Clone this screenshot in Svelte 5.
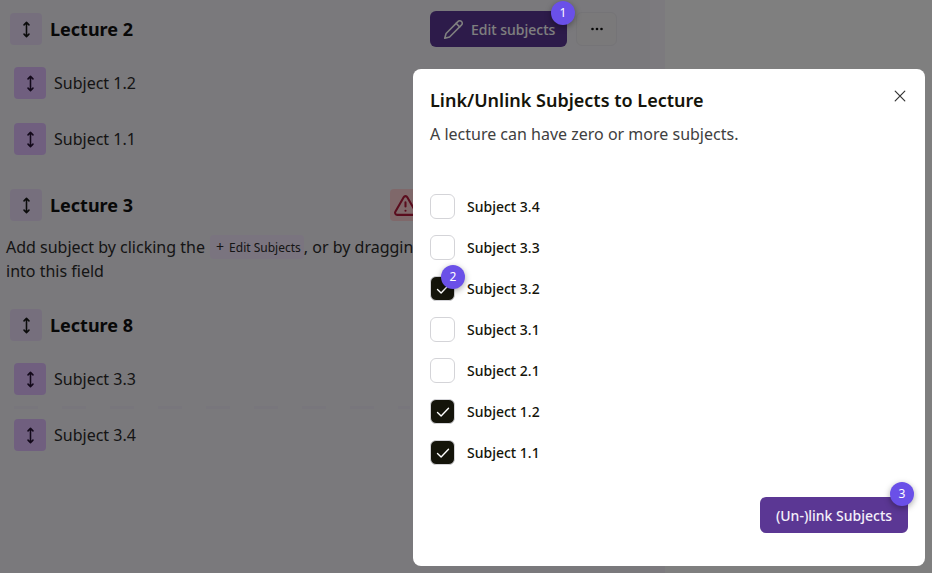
<script>
  const lectures = [
    { name: 'Lecture 2', subjects: ['Subject 1.2', 'Subject 1.1'], edit: true },
    { name: 'Lecture 3', subjects: [], warn: true },
    { name: 'Lecture 8', subjects: ['Subject 3.3', 'Subject 3.4'] }
  ];

  const options = [
    { label: 'Subject 3.4', checked: false },
    { label: 'Subject 3.3', checked: false },
    { label: 'Subject 3.2', checked: true, badge: 2 },
    { label: 'Subject 3.1', checked: false },
    { label: 'Subject 2.1', checked: false },
    { label: 'Subject 1.2', checked: true },
    { label: 'Subject 1.1', checked: true }
  ];
</script>

{#snippet handleIcon()}
  <svg viewBox="0 0 12 24" width="9" height="17" fill="none" stroke="currentColor" stroke-width="2.2" stroke-linecap="round" stroke-linejoin="round">
    <path d="M6 2v20M2.5 5.5L6 2l3.5 3.5M2.5 18.5L6 22l3.5-3.5" />
  </svg>
{/snippet}

<div class="page">
  <main class="board">
    {#each lectures as lecture}
      <section class="lecture">
        <header class="lecture-head">
          <div class="handle">{@render handleIcon()}</div>
          <h2>{lecture.name}</h2>
          {#if lecture.edit}
            <div class="actions">
              <button class="edit-btn">
                <svg viewBox="0 0 24 24" width="21" height="21" fill="none" stroke="currentColor" stroke-width="1.8" stroke-linecap="round" stroke-linejoin="round">
                  <path d="M17 3a2.85 2.83 0 1 1 4 4L7.5 20.5 2 22l1.5-5.5Z" />
                  <path d="m15 5 4 4" />
                </svg>
                Edit subjects
                <span class="badge">1</span>
              </button>
              <button class="more-btn" aria-label="More">
                <svg viewBox="0 0 14 4" width="14" height="4" fill="currentColor">
                  <circle cx="2.5" cy="2" r="1.3" /><circle cx="7" cy="2" r="1.3" /><circle cx="11.5" cy="2" r="1.3" />
                </svg>
              </button>
            </div>
          {/if}
          {#if lecture.warn}
            <div class="warn">
              <svg viewBox="0 0 24 24" width="25" height="25" fill="none" stroke="currentColor" stroke-width="2" stroke-linecap="round" stroke-linejoin="round">
                <path d="m21.73 18-8-14a2 2 0 0 0-3.48 0l-8 14A2 2 0 0 0 4 21h16a2 2 0 0 0 1.73-3Z" />
                <path d="M12 9v4" /><path d="M12 17h.01" />
              </svg>
            </div>
          {/if}
        </header>

        {#if lecture.subjects.length}
          <ul class="subjects">
            {#each lecture.subjects as subject}
              <li>
                <div class="handle strong">{@render handleIcon()}</div>
                <span>{subject}</span>
              </li>
            {/each}
          </ul>
        {:else}
          <p class="hint">
            Add subject by clicking the <span class="chip"><i>+</i>Edit Subjects</span>, or by dragging<br />into this field
          </p>
        {/if}
      </section>
    {/each}
  </main>
  <div class="strip"></div>

  <div class="overlay">
    <div class="modal">
      <button class="close" aria-label="Close">
        <svg viewBox="0 0 12 12" width="12" height="12" fill="none" stroke="currentColor" stroke-width="1.2" stroke-linecap="round">
          <path d="M1.2 1.2l9.6 9.6M10.8 1.2l-9.6 9.6" />
        </svg>
      </button>
      <h1>Link/Unlink Subjects to Lecture</h1>
      <p class="desc">A lecture can have zero or more subjects.</p>

      <div class="options">
        {#each options as option}
          <div class="option">
            <div class="box" class:checked={option.checked}>
              {#if option.checked}
                <svg viewBox="0 0 16 16" width="16" height="16" fill="none" stroke="#fff" stroke-width="1.4" stroke-linecap="round" stroke-linejoin="round">
                  <path d="M2.5 8.5l3.6 3.4 7.4-7.6" />
                </svg>
              {/if}
              {#if option.badge}
                <span class="badge">{option.badge}</span>
              {/if}
            </div>
            <span>{option.label}</span>
          </div>
        {/each}
      </div>

      <footer>
        <button class="submit">
          (Un-)link Subjects
          <span class="badge">3</span>
        </button>
      </footer>
    </div>
  </div>
</div>

<style>
  :global(body) {
    margin: 0;
    font-family: 'Noto Sans', sans-serif;
    background: #fff;
    overflow: hidden;
  }

  .page {
    position: relative;
    display: flex;
    width: 932px;
    height: 573px;
    overflow: hidden;
    color: #1a1a1a;
  }

  .board {
    width: 650px;
    background: #f4f2f8;
    padding-top: 13px;
    box-sizing: border-box;
  }

  .strip {
    width: 15px;
    background: #f8f4fc;
  }

  .lecture {
    margin-bottom: 34px;
  }

  .lecture:nth-child(2) {
    margin-bottom: 26px;
  }

  .lecture-head {
    position: relative;
    display: flex;
    align-items: center;
    gap: 8px;
    height: 32px;
    padding-left: 10px;
  }

  h2 {
    margin: 0;
    font-size: 18px;
    font-weight: 700;
    color: #111;
    line-height: 32px;
  }

  .handle {
    display: flex;
    align-items: center;
    justify-content: center;
    width: 32px;
    height: 32px;
    border-radius: 4px;
    background: #ecdffa;
    color: #161616;
    flex: none;
  }

  .handle.strong {
    background: #e0bfff;
    color: #241033;
  }

  .actions {
    position: absolute;
    left: 430px;
    top: -2px;
    display: flex;
    align-items: center;
    gap: 9px;
  }

  button {
    font-family: inherit;
    border: none;
    padding: 0;
  }

  .edit-btn {
    position: relative;
    display: flex;
    align-items: center;
    gap: 7px;
    width: 137px;
    height: 36px;
    padding-left: 13px;
    box-sizing: border-box;
    border-radius: 6px;
    background: #5b3794;
    color: #fff;
    font-size: 14px;
    font-weight: 500;
  }

  .more-btn {
    display: flex;
    align-items: center;
    justify-content: center;
    width: 41px;
    height: 34px;
    border-radius: 6px;
    background: #f4f3f5;
    border: 1px solid #ebe8ee;
    box-sizing: border-box;
    color: #111;
  }

  .warn {
    position: absolute;
    left: 390px;
    top: 0;
    display: flex;
    align-items: center;
    justify-content: center;
    width: 32px;
    height: 32px;
    border-radius: 4px;
    background: #ffd0d4;
    color: #b5183a;
  }

  .warn svg {
    margin-left: -2px;
  }

  .subjects {
    list-style: none;
    margin: 22px 0 0;
    padding: 0 0 0 14px;
    display: flex;
    flex-direction: column;
    gap: 24px;
  }

  .subjects li {
    position: relative;
    display: flex;
    align-items: center;
    gap: 8px;
    height: 32px;
    font-size: 16px;
    color: #2b2b2b;
  }

  .lecture:nth-child(3) li + li::before {
    content: '';
    position: absolute;
    left: 0;
    right: 240px;
    top: -13px;
    height: 3px;
    background: repeating-linear-gradient(90deg, #f1ecf8 0 24px, transparent 24px 48px);
  }

  .hint {
    margin: 14px 0 0;
    padding-left: 6px;
    font-size: 16px;
    line-height: 24px;
    color: #2b2b2b;
  }

  .chip {
    display: inline-block;
    padding: 0 3px 0 6px;
    margin-left: 1px;
    height: 24px;
    border-radius: 4px;
    background: #f4e8ff;
    font-size: 12px;
    vertical-align: top;
  }

  .chip i {
    font-style: normal;
    font-size: 14px;
    margin-right: 5px;
  }

  .overlay {
    position: absolute;
    inset: 0;
    padding: 69px 7px 7px 413px;
    box-sizing: border-box;
    background: rgba(0, 0, 0, 0.5);
  }

  .modal {
    position: relative;
    display: flex;
    flex-direction: column;
    height: 100%;
    padding: 18px 17px 33px;
    box-sizing: border-box;
    border-radius: 8px;
    background: #fff;
  }

  h1 {
    margin: 0;
    font-size: 18px;
    line-height: 26px;
    font-weight: 600;
    color: #14140a;
  }

  .desc {
    margin: 9px 0 0;
    font-size: 16px;
    line-height: 24px;
    color: #404040;
  }

  .close {
    position: absolute;
    top: 19px;
    right: 19px;
    width: 12px;
    height: 12px;
    background: none;
    color: #333;
  }

  .options {
    display: flex;
    flex-direction: column;
    gap: 16px;
    margin-top: 48px;
  }

  .option {
    display: flex;
    align-items: center;
    gap: 12px;
    height: 25px;
    font-size: 14px;
    font-weight: 500;
    color: #14140a;
  }

  .box {
    position: relative;
    display: flex;
    align-items: center;
    justify-content: center;
    width: 25px;
    height: 25px;
    box-sizing: border-box;
    border: 1px solid #d4d4d8;
    border-radius: 6px;
    background: #fff;
  }

  .box.checked {
    background: #14140a;
  }

  footer {
    margin-top: auto;
    display: flex;
    justify-content: flex-end;
  }

  .submit {
    position: relative;
    width: 148px;
    height: 36px;
    border-radius: 6px;
    background: #5b3794;
    color: #f4f0fa;
    font-size: 14px;
    font-weight: 500;
  }

  .badge {
    position: absolute;
    z-index: 10;
    width: 24px;
    height: 24px;
    border-radius: 50%;
    background: #6a50e8;
    color: #fff;
    font-size: 12px;
    font-weight: 400;
    line-height: 24px;
    text-align: center;
    box-shadow: 0 2px 6px rgba(0, 0, 0, 0.35);
  }

  .edit-btn .badge {
    top: -10px;
    right: -8px;
  }

  .box .badge {
    top: -12px;
    left: 10px;
  }

  .submit .badge {
    top: -15px;
    right: -6px;
  }
</style>
